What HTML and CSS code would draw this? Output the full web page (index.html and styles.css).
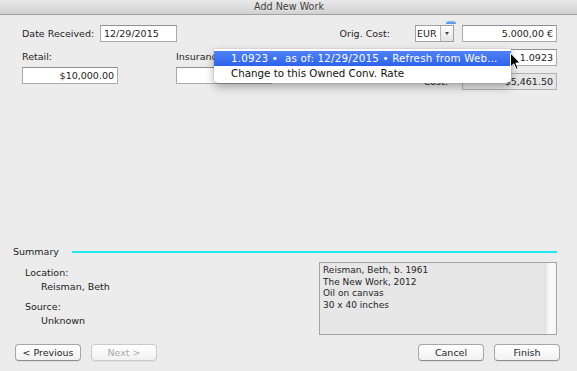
FILE: index.html
```html
<!DOCTYPE html>
<html>
<head>
<meta charset="utf-8">
<title>Add New Work</title>
<link rel="stylesheet" href="styles.css">
</head>
<body>
<div class="titlebar">Add New Work</div>

<div class="form">
  <div class="left-col">
    <div class="row">
      <span class="lbl date-lbl">Date Received:</span>
      <div class="field w77">12/29/2015</div>
    </div>
    <div class="pairs">
      <div class="pair">
        <span class="lbl">Retail:</span>
        <div class="field num w96">$10,000.00</div>
      </div>
      <div class="pair">
        <span class="lbl clip">Insurance</span>
        <div class="field num w96"></div>
      </div>
    </div>
  </div>
  <div class="right-col">
    <div class="rrow">
      <span class="lbl">Orig. Cost:</span>
      <div class="popup">
        <div class="pval">EUR</div>
        <div class="parrow"><span class="tri"></span></div>
        <span class="focus"></span>
      </div>
      <div class="field num w95">5.000,00 €</div>
    </div>
    <div class="rrow">
      <div class="field num w95">1.0923</div>
    </div>
    <div class="rrow">
      <span class="lbl gap14">Cost:</span>
      <div class="field num w95 disabled">$5,461.50</div>
    </div>
  </div>
</div>

<div class="summary-head">
  <span class="lbl">Summary</span>
  <span class="line"></span>
</div>

<div class="summary-body">
  <div class="info">
    <div class="lbl">Location:</div>
    <div class="lbl val">Reisman, Beth</div>
    <div class="lbl grp">Source:</div>
    <div class="lbl val">Unknown</div>
  </div>
  <div class="textbox">
    <div class="txt">Reisman, Beth, b. 1961<br>The New Work, 2012<br>Oil on canvas<br>30 x 40 inches</div>
    <div class="scroll"></div>
  </div>
</div>

<div class="buttons">
  <div class="group">
    <div class="btn">&lt; Previous</div>
    <div class="btn disabled">Next &gt;</div>
  </div>
  <div class="group">
    <div class="btn">Cancel</div>
    <div class="btn">Finish</div>
  </div>
</div>

<div class="menu">
  <div class="mi sel">1.0923 •&nbsp; as of: 12/29/2015 • Refresh from Web...</div>
  <div class="mi">Change to this Owned Conv. Rate</div>
</div>

<svg class="cursor" width="13" height="19" viewBox="0 0 13 19">
  <path d="M1.5 1 L1.5 15 L4.8 11.8 L7.2 17.3 L9.2 16.4 L6.9 11 L11.2 11 Z" fill="#000" stroke="#fff" stroke-width="1" stroke-linejoin="round"/>
</svg>
</body>
</html>
```

FILE: styles.css
```css
* { box-sizing: border-box; }
html, body { margin: 0; padding: 0; }
body {
  width: 577px;
  height: 371px;
  background: #ececec;
  font-family: "DejaVu Sans", sans-serif;
  font-size: 9.5px;
  color: #222;
  overflow: hidden;
  position: relative;
}

.titlebar {
  height: 15px;
  background: linear-gradient(#e9e9e9, #d1d1d1);
  border-bottom: 1px solid #a0a0a0;
  text-align: center;
  line-height: 14px;
  font-size: 9.6px;
  color: #3a3a3a;
  text-shadow: 0 1px 0 rgba(255,255,255,0.5);
  padding-left: 1px;
}

.lbl { line-height: 12px; white-space: nowrap; }
.clip { display: block; width: 38px; overflow: hidden; }

.form {
  display: flex;
  justify-content: space-between;
  padding: 10px 20px 0 22px;
  height: 75px;
}
.left-col { display: flex; flex-direction: column; }
.row { display: flex; align-items: center; height: 17px; }
.date-lbl { width: 78px; }

.field {
  height: 17px;
  border: 1px solid #aaaaaa;
  border-top-color: #909090;
  background: #fff;
  line-height: 15px;
  padding: 0 3px;
  white-space: nowrap;
  overflow: hidden;
}
.field.num { text-align: right; }
.field.disabled { background: #e6e6e6; border-color: #b2b2b2; }
.w77 { width: 77px; }
.w96 { width: 96px; }
.w95 { width: 95px; }

.pairs { display: flex; margin-top: 9px; gap: 58px; }
.pair { display: flex; flex-direction: column; gap: 4px; }

.right-col { display: flex; flex-direction: column; gap: 7px; }
.rrow { display: flex; justify-content: flex-end; align-items: center; height: 17px; }
.gap14 { margin-right: 14px; }

.popup {
  position: relative;
  display: flex;
  width: 39px;
  height: 17px;
  margin-left: 25px;
  margin-right: 8px;
  border: 1px solid #a0a0a0;
}
.pval { width: 24px; background: #fff; padding-left: 1px; line-height: 15px; }
.parrow {
  flex: 1;
  background: linear-gradient(#fdfdfd, #e4e4e4);
  border-left: 1px solid #b4b4b4;
  display: flex;
  align-items: center;
  justify-content: center;
}
.tri {
  width: 0; height: 0;
  border-left: 2.5px solid transparent;
  border-right: 2.5px solid transparent;
  border-top: 3px solid #444;
}
.focus {
  position: absolute;
  right: -3px;
  top: -5px;
  width: 10px;
  height: 3px;
  border-radius: 3px 3px 0 0;
  background: linear-gradient(#8bbcf2, #4d8fe4);
}

.summary-head {
  display: flex;
  align-items: center;
  margin-top: 156px;
  padding: 0 20px 0 13px;
  height: 12px;
}
.summary-head .line {
  flex: 1;
  height: 2px;
  margin-left: 13px;
  background: #1de7ef;
}

.summary-body {
  display: flex;
  justify-content: space-between;
  margin-top: 4px;
  padding: 0 20px 0 25px;
}
.info { padding-top: 5px; }
.info .val { padding-left: 16px; margin-top: 2px; }
.info .grp { margin-top: 8px; }

.textbox {
  width: 238px;
  height: 73px;
  border: 1px solid #a4a4a4;
  background: #e7e7e7;
  display: flex;
}
.textbox .txt {
  flex: 1;
  padding: 2px 3px;
  font-size: 9px;
  line-height: 11.6px;
  color: #1e1e1e;
}
.textbox .scroll {
  width: 11px;
  background: linear-gradient(to right, #ececec, #fbfbfb 40%, #f6f6f6);
  border-left: 1px solid #dcdcdc;
}

.buttons {
  display: flex;
  justify-content: space-between;
  margin-top: 9px;
  padding: 0 17px 0 15px;
}
.group { display: flex; gap: 10px; }
.btn {
  width: 66px;
  height: 17px;
  border: 1px solid #a6a6a6;
  border-bottom-color: #8e8e8e;
  border-radius: 4px;
  background: linear-gradient(#ffffff, #f1f1f1);
  box-shadow: 0 1px 0 rgba(0,0,0,0.06);
  text-align: center;
  line-height: 15px;
  color: #1e1e1e;
}
.btn.disabled { color: #a9a9a9; border-color: #c9c9c9; }

.menu {
  position: absolute;
  left: 214px;
  top: 49px;
  width: 297px;
  height: 34px;
  padding-top: 2px;
  background: rgba(255,255,255,0.98);
  border-radius: 0 0 5px 5px;
  box-shadow: 0 4px 10px rgba(0,0,0,0.3), 0 0 0 1px rgba(0,0,0,0.05);
  font-size: 10.3px;
}
.mi {
  height: 14px;
  line-height: 14px;
  padding-left: 17px;
  white-space: nowrap;
  color: #111;
}
.mi.sel {
  height: 15px;
  line-height: 15px;
  letter-spacing: 0.2px;
  background: linear-gradient(#5082f6, #2d62ec);
  color: #fff;
}

.cursor {
  position: absolute;
  left: 509px;
  top: 52px;
}
```
